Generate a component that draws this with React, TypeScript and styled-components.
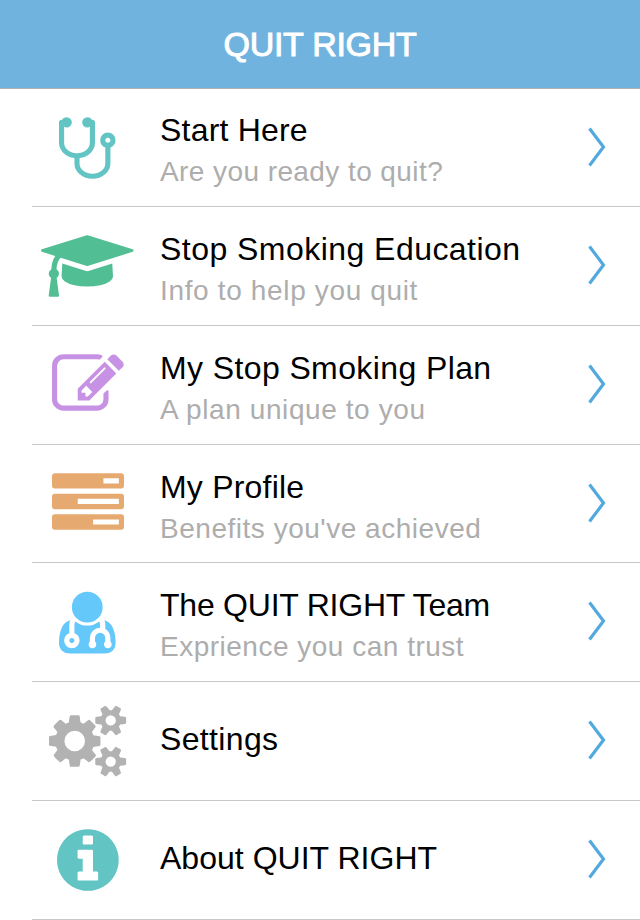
import React from "react";
import styled, { createGlobalStyle } from "styled-components";

const GlobalStyle = createGlobalStyle`
  * { box-sizing: border-box; }
  body { margin: 0; background: #fff; }
`;

const Screen = styled.main`
  width: 640px;
  height: 920px;
  overflow: hidden;
  display: flex;
  flex-direction: column;
  background: #fff;
  font-family: "Liberation Sans", Arial, sans-serif;
`;

const Header = styled.header`
  flex: none;
  height: 89px;
  display: flex;
  align-items: center;
  justify-content: center;
  background: #70b3df;
  border-bottom: 1px solid #aeb1b4;
`;

const Heading = styled.h1`
  margin: 0;
  font-size: 34px;
  line-height: 40px;
  font-weight: 400;
  letter-spacing: -0.3px;
  color: #fff;
  -webkit-text-stroke: 1px #fff;
`;

const Menu = styled.ul`
  list-style: none;
  margin: 0;
  padding: 0 0 0 32px;
  display: grid;
  grid-template-rows: 118px 119px 119px 118px 119px 119px 119px;
`;

const Labels = styled.div<{ $single: boolean }>`
  white-space: nowrap;
  align-self: ${(p) => (p.$single ? "center" : "start")};
  padding-top: ${(p) => (p.$single ? 0 : 23)}px;
  padding-bottom: ${(p) => (p.$single ? 4 : 0)}px;
`;

const Row = styled.li`
  display: grid;
  grid-template-columns: 112px 1fr 18px;
  column-gap: 16px;
  align-items: center;
  padding-right: 34px;
  border-bottom: 1px solid #c8c7cc;

  &:first-child ${Labels} {
    padding-top: 22px;
  }
`;

const IconCell = styled.span<{ $nudge: number }>`
  display: flex;
  justify-content: center;
  padding-right: ${(p) => p.$nudge}px;
`;

const Glyph = styled.svg<{ $width: number; $color: string }>`
  display: block;
  flex: none;
  width: ${(p) => p.$width}px;
  height: 72px;
  fill: ${(p) => p.$color};
`;

const Title = styled.div<{ $spacing: number }>`
  font-size: 32px;
  line-height: 38px;
  letter-spacing: ${(p) => p.$spacing}px;
  color: #000;
`;

const Subtitle = styled.div<{ $spacing: number }>`
  margin-top: 6px;
  font-size: 28px;
  line-height: 34px;
  letter-spacing: ${(p) => p.$spacing}px;
  color: #adadad;
`;

const Chevron = styled.svg`
  display: block;
  width: 18px;
  height: 40px;
  margin-bottom: 2px;
  fill: none;
  stroke: #53a9dd;
  stroke-width: 3.2;
`;

type Icon = { x: number; y: number; w: number; d: string; flip?: boolean; nudge?: number };

const icons: Record<string, Icon> = {
  stethoscope: {
    x: 192, y: -64, w: 1408, nudge: 1.4,
    d: "M1472 640q0-26-19-45t-45-19-45 19-19 45 19 45 45 19 45-19 19-45zm128 0q0 62-35.5 111t-92.5 70v395q0 159-131.5 271.5t-316.5 112.5-316.5-112.5-131.5-271.5v-132q-164-20-274-128t-110-252v-512q0-26 19-45t45-19q6 0 16 2 17-30 47-48t65-18q53 0 90.5 37.5t37.5 90.5-37.5 90.5-90.5 37.5q-33 0-64-18v402q0 106 94 181t226 75 226-75 94-181v-402q-31 18-64 18-53 0-90.5-37.5t-37.5-90.5 37.5-90.5 90.5-37.5q35 0 65 18t47 48q10-2 16-2 26 0 45 19t19 45v512q0 144-110 252t-274 128v132q0 106 94 181t226 75 226-75 94-181v-395q-57-21-92.5-70t-35.5-111q0-80 56-136t136-56 136 56 56 136z",
  },
  cap: {
    x: 0, y: 0, w: 2304, nudge: 1.4,
    d: "M1774 836l18 316q4 69-82 128t-235 93.5-323 34.5-323-34.5-235-93.5-82-128l18-316 574 181q22 7 48 7t48-7zm530-324q0 23-22 31l-1120 352q-4 1-10 1t-10-1l-652-206q-43 34-71 111.5t-34 178.5q63 36 63 109 0 69-58 107l58 433q2 14-8 25-9 11-24 11h-192q-15 0-24-11-10-11-8-25l58-433q-58-38-58-107 0-73 65-111 11-207 98-330l-333-104q-22-8-22-31t22-31l1120-352q4-1 10-1t10 1l1120 352q22 8 22 31z",
  },
  pencil: {
    x: 0, y: 0, w: 1792,
    d: "M888 1184l116-116-152-152-116 116v56h96v96h56zm440-720q-16-16-33 1l-350 350q-17 17-1 33t33-1l350-350q17-17 1-33zm80 594v190q0 119-84.5 203.5t-203.5 84.5h-832q-119 0-203.5-84.5t-84.5-203.5v-832q0-119 84.5-203.5t203.5-84.5h832q63 0 117 25 15 7 18 23 3 17-9 29l-49 49q-14 14-32 8-23-6-45-6h-832q-66 0-113 47t-47 113v832q0 66 47 113t113 47h832q66 0 113-47t47-113v-126q0-13 9-22l64-64q15-15 35-7t20 29zm-96-738l288 288-672 672h-288v-288zm444 132l-92 92-288-288 92-92q28-28 68-28t68 28l152 152q28 28 28 68t-28 68z",
  },
  tasks: {
    x: 0, y: 0, w: 1792,
    d: "M1024 1408h640v-128h-640v128zm-384-512h1024v-128h-1024v128zm640-512h384v-128h-384v128zm512 832v256q0 26-19 45t-45 19h-1664q-26 0-45-19t-19-45v-256q0-26 19-45t45-19h1664q26 0 45 19t19 45zm0-512v256q0 26-19 45t-45 19h-1664q-26 0-45-19t-19-45v-256q0-26 19-45t45-19h1664q26 0 45 19t19 45zm0-512v256q0 26-19 45t-45 19h-1664q-26 0-45-19t-19-45v-256q0-26 19-45t45-19h1664q26 0 45 19t19 45z",
  },
  doctor: {
    x: 0, y: -14, w: 1408, flip: true, nudge: 1.4,
    d: "M384 192q0 -26 -19 -45t-45 -19t-45 19t-19 45t19 45t45 19t45 -19t19 -45zM1408 131q0 -121 -73 -190t-194 -69h-874q-121 0 -194 69t-73 190q0 68 5.5 131t24 138t47.5 132.5t81 103t120 60.5q-22 -52 -22 -120v-203q-58 -20 -93 -70t-35 -111q0 -80 56 -136t136 -56t136 56t56 136q0 61 -35.5 111t-92.5 70v203q0 62 25 93q132 -104 295 -104t295 104q25 -31 25 -93v-64q-106 0 -181 -75t-75 -181v-89q-32 -29 -32 -71q0 -40 28 -68t68 -28t68 28t28 68q0 42 -32 71v89q0 52 38 90t90 38t90 -38t38 -90v-89q-32 -29 -32 -71q0 -40 28 -68t68 -28t68 28t28 68q0 42 -32 71v89q0 68 -34.5 127.5t-93.5 93.5q0 10 .5 42.5t0 48t-2.5 41.5t-7 47t-13 40q68 -15 120 -60.5t81 -103t47.5 -132.5t24 -138t5.5 -131zM1088 1024q0 -159 -112.5 -271.5t-271.5 -112.5t-271.5 112.5t-112.5 271.5t112.5 271.5t271.5 112.5t271.5 -112.5t112.5 -271.5z",
  },
  cogs: {
    x: 0, y: 0, w: 1920,
    d: "M896 896q0-106-75-181t-181-75-181 75-75 181 75 181 181 75 181-75 75-181zm768 512q0-52-38-90t-90-38-90 38-38 90q0 53 37.5 90.5t90.5 37.5 90.5-37.5 37.5-90.5zm0-1024q0-52-38-90t-90-38-90 38-38 90q0 53 37.5 90.5t90.5 37.5 90.5-37.5 37.5-90.5zm-384 421v185q0 10-7 19.5t-16 10.5l-155 24q-11 35-32 76 34 48 90 115 7 11 7 20 0 12-7 19-23 30-82.5 89.5t-78.5 59.5q-11 0-21-7l-115-90q-37 19-77 31-11 108-23 155-7 24-30 24h-186q-11 0-20-7.5t-10-17.5l-23-153q-34-10-75-31l-118 89q-7 7-20 7-11 0-21-8-144-133-144-160 0-9 7-19 10-14 41-53t47-61q-23-44-35-82l-152-24q-10-1-17-9.5t-7-19.5v-185q0-10 7-19.5t16-10.5l155-24q11-35 32-76-34-48-90-115-7-11-7-20 0-12 7-20 22-30 82-89t79-59q11 0 21 7l115 90q34-18 77-32 11-108 23-154 7-24 30-24h186q11 0 20 7.5t10 17.5l23 153q34 10 75 31l118-89q8-7 20-7 11 0 21 8 144 133 144 160 0 8-7 19-12 16-42 54t-45 60q23 48 34 82l152 23q10 2 17 10.5t7 19.5zm640 533v140q0 16-149 31-12 27-30 52 51 113 51 138 0 4-4 7-122 71-124 71-8 0-46-47t-52-68q-20 2-30 2t-30-2q-14 21-52 68t-46 47q-2 0-124-71-4-3-4-7 0-25 51-138-18-25-30-52-149-15-149-31v-140q0-16 149-31 13-29 30-52-51-113-51-138 0-4 4-7 4-2 35-20t59-34 30-16q8 0 46 46.5t52 67.5q20-2 30-2t30 2q51-71 92-112l6-2q4 0 124 70 4 3 4 7 0 25-51 138 17 23 30 52 149 15 149 31zm0-1024v140q0 16-149 31-12 27-30 52 51 113 51 138 0 4-4 7-122 71-124 71-8 0-46-47t-52-68q-20 2-30 2t-30-2q-14 21-52 68t-46 47q-2 0-124-71-4-3-4-7 0-25 51-138-18-25-30-52-149-15-149-31v-140q0-16 149-31 13-29 30-52-51-113-51-138 0-4 4-7 4-2 35-20t59-34 30-16q8 0 46 46.5t52 67.5q20-2 30-2t30 2q51-71 92-112l6-2q4 0 124 70 4 3 4 7 0 25-51 138 17 23 30 52 149 15 149 31z",
  },
  info: {
    x: 128, y: 0, w: 1536,
    d: "M1152 1376v-160q0-14-9-23t-23-9h-96v-512q0-14-9-23t-23-9h-320q-14 0-23 9t-9 23v160q0 14 9 23t23 9h96v320h-96q-14 0-23 9t-9 23v160q0 14 9 23t23 9h448q14 0 23-9t9-23zm-128-896v-160q0-14-9-23t-23-9h-192q-14 0-23 9t-9 23v160q0 14 9 23t23 9h192q14 0 23-9t9-23zm640 416q0 209-103 385.5t-279.5 279.5-385.5 103-385.5-103-279.5-279.5-103-385.5 103-385.5 279.5-279.5 385.5-103 385.5 103 279.5 279.5 103 385.5z",
  },
};

function MenuIcon({ name, color }: { name: string; color: string }) {
  const icon = icons[name];
  return (
    <IconCell $nudge={icon.nudge ?? 0}>
      <Glyph
        $width={(icon.w * 72) / 1792}
        $color={color}
        viewBox={`${icon.x} ${icon.y} ${icon.w} 1792`}
        aria-hidden="true"
      >
        <path d={icon.d} transform={icon.flip ? "translate(0 1536) scale(1 -1)" : undefined} />
      </Glyph>
    </IconCell>
  );
}

type Item = {
  icon: string;
  color: string;
  title: string;
  titleSpacing: number;
  subtitle?: string;
  subtitleSpacing?: number;
};

const items: Item[] = [
  { icon: "stethoscope", color: "#62c5c4", title: "Start Here", titleSpacing: 0.2, subtitle: "Are you ready to quit?", subtitleSpacing: 0.42 },
  { icon: "cap", color: "#52be93", title: "Stop Smoking Education", titleSpacing: 0.46, subtitle: "Info to help you quit", subtitleSpacing: 0.65 },
  { icon: "pencil", color: "#c792e3", title: "My Stop Smoking Plan", titleSpacing: 0.39, subtitle: "A plan unique to you", subtitleSpacing: 0.59 },
  { icon: "tasks", color: "#e6aa71", title: "My Profile", titleSpacing: 0.2, subtitle: "Benefits you've achieved", subtitleSpacing: 0.52 },
  { icon: "doctor", color: "#65c8fb", title: "The QUIT RIGHT Team", titleSpacing: -0.23, subtitle: "Exprience you can trust", subtitleSpacing: 0.5 },
  { icon: "cogs", color: "#b2b2b2", title: "Settings", titleSpacing: 0.35 },
  { icon: "info", color: "#62c5c4", title: "About QUIT RIGHT", titleSpacing: 0.02 },
];

export default function App() {
  return (
    <Screen>
      <GlobalStyle />
      <Header>
        <Heading>QUIT RIGHT</Heading>
      </Header>
      <Menu>
        {items.map((item) => (
          <Row key={item.title}>
            <MenuIcon name={item.icon} color={item.color} />
            <Labels $single={!item.subtitle}>
              <Title $spacing={item.titleSpacing}>{item.title}</Title>
              {item.subtitle && (
                <Subtitle $spacing={item.subtitleSpacing ?? 0}>{item.subtitle}</Subtitle>
              )}
            </Labels>
            <Chevron viewBox="0 0 18 40" aria-hidden="true">
              <path d="M1.5 1.5L15.5 20L1.5 38.5" />
            </Chevron>
          </Row>
        ))}
      </Menu>
    </Screen>
  );
}
